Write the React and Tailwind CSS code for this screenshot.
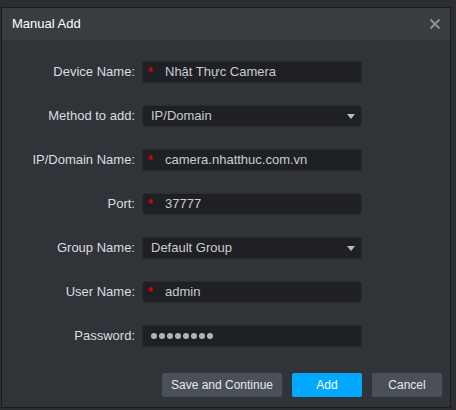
import { useState } from 'react';

const fields = [
  { label: 'Device Name:', value: 'Nhật Thực Camera', required: true },
  { label: 'Method to add:', value: 'IP/Domain', select: true },
  { label: 'IP/Domain Name:', value: 'camera.nhatthuc.com.vn', required: true },
  { label: 'Port:', value: '37777', required: true },
  { label: 'Group Name:', value: 'Default Group', select: true },
  { label: 'User Name:', value: 'admin', required: true },
  { label: 'Password:', password: true },
];

function Field({ field }) {
  return (
    <div className="flex items-center h-[22px]">
      <div className="w-[140px] shrink-0 text-right pr-[7px] text-[13px] text-[#dcdde0]">{field.label}</div>
      <div className="relative flex items-center w-[220px] h-[22px] bg-[#1f2024] border border-[#2a2c30] rounded-[2px] text-[13px] text-[#c9ccd2]">
        {field.required && (
          <span className="absolute left-[5px] top-[1px] text-[#e00000] text-[12px] font-bold">*</span>
        )}
        {field.password ? (
          <div className="flex gap-[2px] pl-[8px]">
            {Array.from({ length: 8 }).map((_, i) => (
              <span key={i} className="w-[6px] h-[6px] rounded-full bg-[#aab4c6]" />
            ))}
          </div>
        ) : (
          <span className={field.required ? 'pl-[22px]' : 'pl-[8px]'}>{field.value}</span>
        )}
        {field.select && (
          <span className="absolute right-[6px] top-[8px] w-0 h-0 border-l-[4px] border-r-[4px] border-t-[5px] border-l-transparent border-r-transparent border-t-[#b8bcc4]" />
        )}
      </div>
    </div>
  );
}

export default function App() {
  const [open] = useState(true);
  return (
    <div className="w-[456px] h-[410px] bg-[#2c2e33] pt-[7px] pl-[1px] font-['Liberation_Sans',Arial,sans-serif]">
      {open && (
        <div className="w-[450px] h-[401px] border border-[#1b1c1f] bg-[#303338] flex flex-col">
          <div className="h-[32px] bg-[#393c41] flex items-center justify-between pl-[10px] pr-[9px]">
            <span className="text-[13px] text-white">Manual Add</span>
            <svg width="12" height="12" viewBox="0 0 12 12" className="text-[#8d9096]">
              <path d="M1.5 1.5 L10.5 10.5 M10.5 1.5 L1.5 10.5" stroke="currentColor" strokeWidth="2" />
            </svg>
          </div>
          <div className="flex flex-col gap-[22px] pt-[21px]">
            {fields.map(f => (
              <Field key={f.label} field={f} />
            ))}
          </div>
          <div className="flex justify-end gap-[10px] pr-[8px] mt-[26px] text-[12px]">
            <button className="w-[120px] h-[24px] bg-[#4a5058] text-[#e6e8eb] rounded-[2px]">Save and Continue</button>
            <button className="w-[70px] h-[24px] bg-[#00a9ff] text-white rounded-[2px]">Add</button>
            <button className="w-[70px] h-[24px] bg-[#4a5058] text-[#e6e8eb] rounded-[2px]">Cancel</button>
          </div>
        </div>
      )}
    </div>
  );
}
